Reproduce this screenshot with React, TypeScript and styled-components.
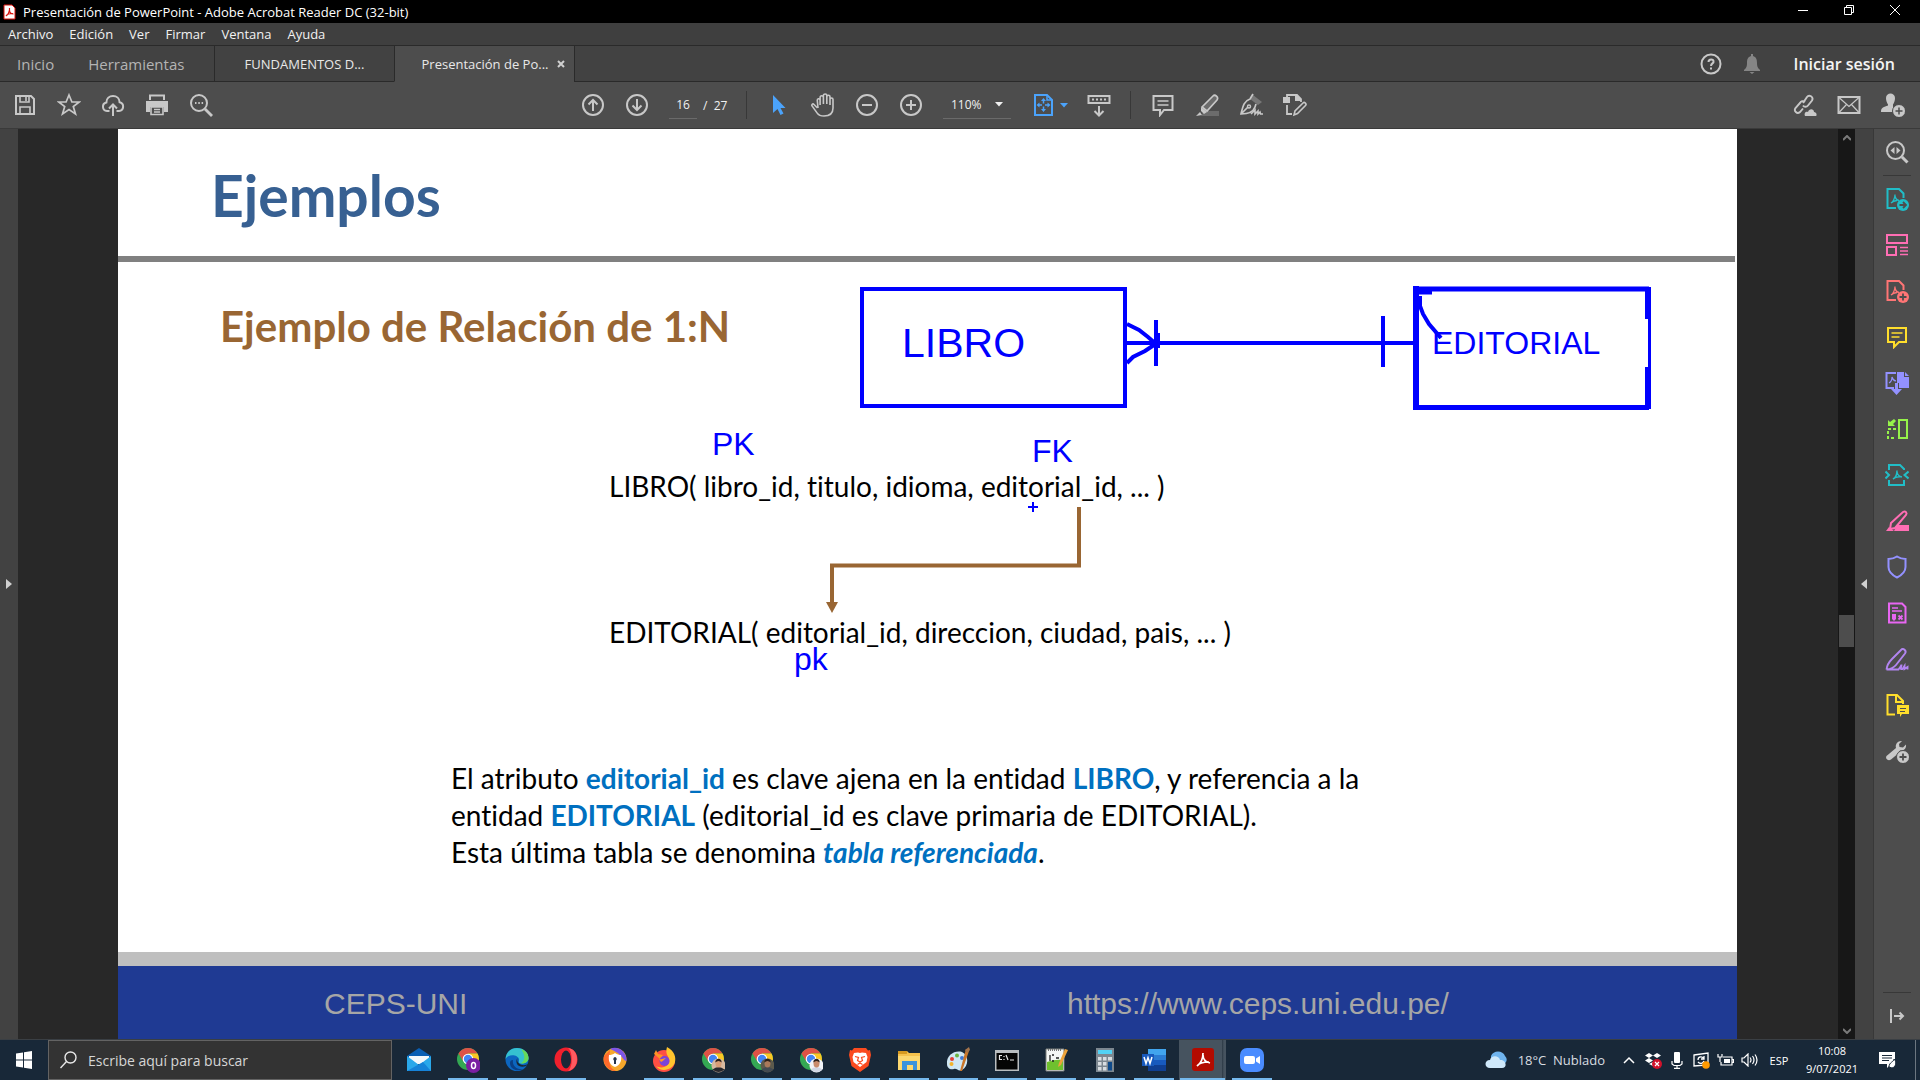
import React from "react";
import styled, { createGlobalStyle, css } from "styled-components";

const ui = `"Open Sans", "Noto Sans", sans-serif`;
const slideFont = `Lato, "Open Sans", sans-serif`;
const ink = "#0000ff";
const brown = "#996633";

const GlobalStyle = createGlobalStyle`
  * { box-sizing: border-box; }
  html, body, #root { height: 100%; margin: 0; }
  body { background: #282828; overflow: hidden; font-family: ${ui}; }
  button, input, select { font: inherit; color: inherit; background: none; border: 0; padding: 0; margin: 0; border-radius: 0; }
  button { display: inline-flex; align-items: center; justify-content: center; cursor: pointer; }
  svg { display: block; flex: none; }
`;

const Shell = styled.div`
  display: flex;
  flex-direction: column;
  height: 100vh;
`;

/* ---------- window chrome ---------- */

const TitleBar = styled.header`
  display: flex;
  align-items: center;
  height: 23px;
  padding: 0 2px 0 3px;
  background: #000;
  color: #fff;
`;

const TitleText = styled.h1`
  flex: 1;
  margin: 0 0 0 7px;
  font-size: 13px;
  font-weight: 400;
  line-height: 20px;
`;

const WindowButton = styled.button`
  width: 46px;
  height: 20px;
  align-self: flex-start;
`;

const MenuBar = styled.nav`
  display: flex;
  align-items: center;
  gap: 16px;
  height: 22px;
  padding: 0 8px;
  background: #3f3f3f;
  color: #f2f2f2;
  font-size: 13px;
`;

const TabBar = styled.div`
  display: flex;
  height: 37px;
  background: #424242;
  border-top: 1px solid #2a2a2a;
  color: #e8e8e8;
`;

const HomeTab = styled.button`
  padding: 0 17px;
  font-size: 15px;
  color: #b4b4b4;
  border-bottom: 1px solid #2a2a2a;
`;

const HomeTabs = styled.div`
  display: flex;
  width: 214px;
`;

const ToolsTab = styled(HomeTab)`
  flex: 1;
  justify-content: flex-start;
`;

const DocTab = styled.button<{ $active?: boolean }>`
  width: 180px;
  gap: 9px;
  padding-left: ${(p) => (p.$active ? "18px" : "0")};
  font-size: 13px;
  border-left: 1px solid #2a2a2a;
  border-bottom: 1px solid ${(p) => (p.$active ? "#4d4d4d" : "#2a2a2a")};
  background: ${(p) => (p.$active ? "#4d4d4d" : "#424242")};
`;

const TabActions = styled.div`
  display: flex;
  flex: 1;
  align-items: center;
  justify-content: flex-end;
  gap: 19px;
  padding-right: 25px;
  border-left: 1px solid #2a2a2a;
  border-bottom: 1px solid #2a2a2a;
`;

const SignIn = styled.button`
  margin-left: 12px;
  font-size: 16px;
  font-weight: 600;
  color: #f4f4f4;
`;

const Toolbar = styled.div`
  display: grid;
  grid-template-columns: 1fr auto 1fr;
  align-items: center;
  height: 47px;
  background: #4d4d4d;
  border-bottom: 1px solid #3a3a3a;
  color: #c8c8c8;
`;

const ToolGroup = styled.div<{ $end?: boolean; $middle?: boolean }>`
  display: flex;
  align-items: center;
  padding: ${(p) => (p.$middle ? "0 32px 0 0" : p.$end ? "0 5px 0 0" : "0 0 0 3px")};
  justify-content: ${(p) => (p.$end ? "flex-end" : "flex-start")};
`;

const ToolButton = styled.button<{ $blue?: boolean; $menu?: boolean }>`
  gap: 4px;
  width: ${(p) => (p.$menu ? "54px" : "44px")};
  height: 40px;
  color: ${(p) => (p.$blue ? "#4ba3fb" : "#c8c8c8")};
`;

const Divider = styled.div`
  width: 1px;
  height: 28px;
  margin: 0 10px 0 9px;
  background: #383838;
`;

const PageBox = styled.label`
  display: flex;
  align-items: center;
  gap: 6px;
  margin-left: 10px;
  width: 68px;
  font-size: 12px;
  color: #f0f0f0;
  white-space: nowrap;
`;

const PageInput = styled.input`
  width: 28px;
  height: 28px;
  text-align: center;
  border-bottom: 1px solid #6a6a6a;
`;

const ZoomBox = styled.label`
  display: flex;
  align-items: center;
  width: 68px;
  height: 28px;
  margin: 0 12px 0 10px;
  padding-right: 8px;
  border-bottom: 1px solid #6a6a6a;
  color: #f0f0f0;
  font-size: 12px;
`;

const ZoomSelect = styled.select`
  flex: 1;
  min-width: 0;
  padding-left: 8px;
  appearance: none;
`;

/* ---------- document area ---------- */

const Workspace = styled.main`
  display: flex;
  flex: 1;
  min-height: 0;
`;

const SideStrip = styled.button<{ $right?: boolean }>`
  width: ${(p) => (p.$right ? "19px" : "18px")};
  background: #424242;
  color: #d0d0d0;
  border-right: ${(p) => (p.$right ? "1px solid #383838" : "0")};
`;

const Canvas = styled.div`
  display: flex;
  flex: 1;
  padding: 0 101px 0 100px;
  background: #282828;
`;

const Slide = styled.article`
  position: relative;
  display: flex;
  flex: 1;
  flex-direction: column;
  background: #fff;
  color: #000;
  font-family: ${slideFont};
  font-variant-ligatures: none;
`;

const SlideTitle = styled.h2`
  margin: 0;
  padding: 34px 0 0 93px;
  height: 127px;
  font-size: 57px;
  line-height: 64px;
  font-weight: 700;
  color: #376092;
`;

const SlideRule = styled.hr`
  width: calc(100% - 2px);
  height: 6px;
  margin: 0;
  border: 0;
  background: #808080;
`;

const SlideSubtitle = styled.h3`
  margin: 0;
  padding: 38px 0 0 102px;
  font-size: 42px;
  line-height: 52px;
  font-weight: 700;
  color: ${brown};
`;

const Relations = styled.div`
  display: flex;
  flex-direction: column;
  gap: 110px;
  padding: 116px 0 0 491px;
  font-size: 28px;
  line-height: 36px;
`;

const Line = styled.p`
  margin: 0;
  white-space: nowrap;
`;

const Explanation = styled.div`
  padding: 110px 0 0 333px;
  font-size: 28px;
  line-height: 37px;

  strong { color: #0070c0; font-weight: 700; }
`;

const SlideFooter = styled.footer`
  display: grid;
  grid-template-columns: 949px 1fr;
  align-items: center;
  height: 87px;
  margin-top: auto;
  padding-top: 2px;
  border-top: 14px solid #bfbfbf;
  background: #1f3a93;
  color: #a6a6a6;
  font-family: "Liberation Sans", Arial, sans-serif;
  font-size: 30px;
  line-height: 36px;
`;

const FooterOrg = styled.span`
  padding-left: 206px;
`;

const FooterLink = styled.a`
  color: inherit;
  text-decoration: none;
`;

const Ink = styled.svg`
  position: absolute;
  left: 0;
  top: 0;
`;

const Note = styled.span<{ $x: number; $y: number; $size?: number }>`
  position: absolute;
  left: ${(p) => p.$x}px;
  top: ${(p) => p.$y}px;
  font-family: "Liberation Sans", Arial, sans-serif;
  font-size: ${(p) => p.$size ?? 32}px;
  line-height: 40px;
  color: ${ink};
`;

const ScrollTrack = styled.div`
  display: flex;
  flex-direction: column;
  align-items: center;
  width: 17px;
  background: #171717;
  color: #7a7a7a;
`;

const ScrollArrow = styled.button`
  width: 17px;
  height: 17px;
`;

const Thumb = styled.div`
  width: 15px;
  height: 32px;
  background: #4d4d4d;
`;

const Space = styled.div<{ $grow: number }>`
  flex: ${(p) => p.$grow};
`;

const Rail = styled.aside`
  display: flex;
  flex-direction: column;
  width: 46px;
  background: #4d4d4d;
`;

const RailButton = styled.button<{ $color: string }>`
  height: 46px;
  color: ${(p) => p.$color};
`;

const RailRule = styled.div`
  height: 1px;
  margin: 0 9px;
  background: #383838;
`;

/* ---------- taskbar ---------- */

const Taskbar = styled.footer`
  display: flex;
  height: 41px;
  background: #182838;
  border-top: 1px solid #3a3f44;
  color: #fff;
`;

const StartButton = styled.button`
  width: 48px;
`;

const SearchBox = styled.label`
  display: flex;
  align-items: center;
  gap: 11px;
  width: 344px;
  padding-left: 11px;
  margin-right: 2px;
  background: #333;
  border: 1px solid #636363;
  font-size: 14px;
`;

const SearchInput = styled.input`
  flex: 1;
  &::placeholder { color: #d6d6d6; opacity: 1; }
`;

const AppButton = styled.button<{ $running?: boolean; $active?: boolean }>`
  width: 49px;
  ${(p) =>
    p.$active &&
    css`
      background: linear-gradient(to right, #46535f 44px, #2b3844 44px, #46535f 46px);
    `}
  background-clip: content-box;
  padding: 0 1px;
  position: relative;
  &::after {
    content: "";
    position: absolute;
    left: ${(p) => (p.$active ? "2px" : "5px")};
    right: ${(p) => (p.$active ? "2px" : "4px")};
    bottom: 0;
    height: 2px;
    background: ${(p) => (p.$running ? "#76b9ed" : "transparent")};
  }
`;

const Tray = styled.div`
  display: flex;
  flex: 1;
  justify-content: flex-end;
  align-items: center;
  font-size: 12px;
`;

const Weather = styled.button`
  gap: 11px;
  margin-right: 12px;
  font-size: 13px;
  color: #d8dde1;
`;

const TrayButton = styled.button`
  width: 24px;
  height: 40px;
`;

const Language = styled.button`
  width: 36px;
  height: 40px;
  font-size: 11px;
`;

const Clock = styled.button`
  flex-direction: column;
  width: 70px;
  line-height: 18px;
  font-size: 11px;
`;

const Notifications = styled.button`
  width: 40px;
  height: 40px;
  margin-right: 8px;
`;

const DesktopEdge = styled.button`
  width: 5px;
  height: 40px;
  border-left: 1px solid #6c7680;
`;

/* ---------- icons ---------- */

const Icon = ({ children, size = 24, box = 24 }: { children: React.ReactNode; size?: number; box?: number }) => (
  <svg width={size} height={size} viewBox={`0 0 ${box} ${box}`} fill="none" stroke="currentColor" strokeWidth={2} aria-hidden="true">
    {children}
  </svg>
);

const Caret = () => (
  <svg width="8" height="5" viewBox="0 0 8 5" aria-hidden="true"><path d="M0 0h8L4 4.600z" fill="currentColor" /></svg>
);

const acro = "M8 16c2-1 4-4.500 4-8.500M12 9c.5 3 2 4.500 5 5M8 16c2-2 5-2.500 8-2.200";

const SaveIcon = () => <Icon><path d="M3 3h15l3 3v15H3z" /><path d="M7 3v6h9V3M13 4v4M7 21v-7h10v7" strokeWidth={1.600} /></Icon>;
const StarIcon = () => <Icon><path d="M12 2l2.900 7h7.300l-5.900 4.600 2.200 7.400L12 16.600 5.500 21l2.200-7.400L1.800 9h7.300z" strokeWidth={1.700} /></Icon>;
const CloudIcon = () => <Icon><path d="M8.500 18H6a4.300 4.300 0 0 1-.6-8.500C5.400 5.500 8.300 3 12 3s6.500 2.500 6.600 6.300A4.400 4.400 0 0 1 18 18h-2.500M12 23V12M8 15.500l4-4 4 4" /></Icon>;
const PrintIcon = () => (
  <Icon><path d="M5 7V2.500h14V7" /><path d="M1 8h22v11h-4v-5H5v5H1z" fill="currentColor" stroke="none" /><path d="M6 14v7.500h12V14zM9 16.500h6M9 19h6" strokeWidth={1.600} /></Icon>
);
const FindIcon = () => <Icon><circle cx="10" cy="10" r="8" /><path d="M16 16l7 7" strokeWidth={2.800} /><path d="M6 10h1.500M9.300 10h1.500M12.600 10h1.500" /></Icon>;
const UpIcon = () => <Icon><circle cx="12" cy="12" r="10" /><path d="M12 18V7M7.500 11.500L12 7l4.500 4.500" /></Icon>;
const DownIcon = () => <Icon><circle cx="12" cy="12" r="10" /><path d="M12 6v11M7.500 12.500L12 17l4.500-4.500" /></Icon>;
const MinusIcon = () => <Icon><circle cx="12" cy="12" r="10" /><path d="M7 12h10" /></Icon>;
const PlusIcon = () => <Icon><circle cx="12" cy="12" r="10" /><path d="M7 12h10M12 7v10" /></Icon>;
const PointerIcon = () => <Icon><path d="M6 2v18l4.500-4 3 6 3-1.500-3-5.500h5z" fill="currentColor" stroke="none" /></Icon>;
const HandIcon = () => (
  <Icon><path d="M6.500 15L3 11.500c-1.300-1.300-2.800.2-1.800 1.600l5 7C7.700 22.300 9.500 23 13 23c5.500 0 9-2.500 9-8V6.500c0-2-3-2-3 0V12M19 8V3.700c0-2-3.200-2-3.200 0V11M15.800 5V2.500c0-2-3.400-2-3.400 0V11M12.400 4.500c0-2.300-3.300-2.300-3.300 0V12M9.100 7c-.6-1.900-3-1.500-2.800.5L7 15" strokeWidth={1.600} /></Icon>
);
const FitIcon = () => (
  <Icon><path d="M3 2h12l5 5v15H3z" /><path d="M15 2v5h5" strokeWidth={1.500} /><path d="M11.500 7v10M6.500 12h10" strokeWidth={1.500} strokeDasharray="3.500 3" /><path d="M11.500 5l-2.500 3h5zM11.500 19l-2.500-3h5zM4.500 12l3-2.500v5zM18.500 12l-3-2.500v5z" fill="currentColor" stroke="none" /></Icon>
);
const ReadIcon = () => <Icon><rect x="1.500" y="3" width="21" height="7" /><path d="M5 6.500h14" strokeDasharray="2 2" /><path d="M12 13v9M7.500 18l4.500 4.500 4.500-4.500" /></Icon>;
const CommentIcon = () => <Icon><path d="M2.500 3h19v14H13l-4 5v-5H2.500z" /><path d="M6.500 8h11M6.500 12h11" strokeWidth={1.500} /></Icon>;
const MarkerIcon = () => (
  <Icon><path d="M9 18h15v5H6z" fill="#6c6c6c" stroke="none" /><path d="M7 14L18 3c2-2 6 1 4 4L12 18z" fill="#6c6c6c" strokeWidth={1.700} /><path d="M6 14l6 5-3 2-3-3zM5 19l2 3-6 1z" fill="currentColor" stroke="none" /></Icon>
);
const SignIcon = () => (
  <Icon><path d="M14 2l9 7-4 3-8-6z" fill="#777" stroke="none" /><path d="M14 1l-3 5C5 8 4 13 2 21c6 0 12-1 14-7l1-3M2 21l7-7" strokeWidth={1.700} /><circle cx="10" cy="13.500" r="1.500" strokeWidth={1.500} /><path d="M12 21l4-4v4l3-3v3l2-2 .5 2H24" strokeWidth={1.600} /></Icon>
);
const EditPagesIcon = () => (
  <Icon><path d="M4 8V2h10l4 4v3" strokeWidth={1.800} /><path d="M0 4h7v6H0zM12 2h2l4 4v2h-6z" fill="currentColor" stroke="none" /><path d="M4 12v9h5" strokeWidth={1.800} /><path d="M11 22l1-4 8-8c1.500-1.500 4 1 2.500 2.500l-8 8z" strokeWidth={1.600} /></Icon>
);
const LinkIcon = () => (
  <Icon><path d="M10 10l4-6c2-3 7 0 5 3.500l-4 5c-1.500 2-4 1.500-5 0M12 9C10 7.500 8 8 7 10l-4.500 5c-2 3 1.500 6.500 4.500 4l3-3.500" strokeWidth={1.900} /><path d="M12 23c-1.500-4 2-5 3-4 1-4 6-3.500 6 0 3 0 3 4 2 4z" fill="currentColor" stroke="none" /></Icon>
);
const MailIcon = () => <Icon><rect x="1.500" y="4" width="21" height="16" /><path d="M2 4.500l10 9 10-9M2 19.500l7.500-8M22 19.500l-7.500-8" strokeWidth={1.200} /></Icon>;
const UserIcon = () => (
  <Icon><path d="M5 5c0-6 9-6 9 0 0 3-1 5-2 6.500V14l2 1v4H0c0-5 3-5 7-6.500v-1C6 10 5 8 5 5z" fill="currentColor" stroke="none" /><circle cx="18" cy="18" r="6.500" fill="currentColor" stroke="#4d4d4d" strokeWidth={1} /><path d="M18 14.500v7M14.500 18h7" stroke="#4d4d4d" strokeWidth={1.500} /></Icon>
);

const NavLens = () => <Icon><circle cx="10.500" cy="10.500" r="8.500" /><path d="M17 17l5.500 5.500" strokeWidth={3} /><path d="M9.500 7v7L5.500 10.500zM11.500 7v7l4-3.500z" fill="currentColor" stroke="none" /></Icon>;
const PdfBadge = ({ plus }: { plus?: boolean }) => (
  <Icon>
    <path d="M11 21H2.500V2H14l4.500 4.500V11" />
    <path d="M6 16c2-1 4-5 4-8.500M10 9c.5 2.500 1.500 4 4 4.500M6 16c1.500-1.500 3.500-2.300 6-2.500" strokeWidth={1.300} />
    <circle cx="18" cy="18" r="6" fill="currentColor" stroke="none" />
    <path d={plus ? "M18 14.500v7M14.500 18h7" : "M14.500 18h6M18 15l3 3-3 3"} stroke="#4d4d4d" strokeWidth={1.800} />
  </Icon>
);
const OrganizeIcon = () => <Icon><rect x="2" y="2" width="20" height="8" /><rect x="2" y="14" width="9" height="8" /><path d="M15 14.500h8M15 18h8M15 21.500h8" strokeWidth={1.300} /></Icon>;
const RailComment = () => <Icon><path d="M3 3h18v14h-7l-5 5v-5H3z" /><path d="M6.500 8h11M6.500 12h8" strokeWidth={1.700} /></Icon>;
const CombineIcon = () => (
  <Icon><path d="M9 17H1.500V2H11" /><path d="M12 1h7v5h5v11H14v-5h-2z" fill="currentColor" stroke="none" /><path d="M20 1l4 4h-4z" fill="currentColor" stroke="none" /><path d="M4 12c2-1 3-4 3-6 .5 2 1.500 3.500 4 4" strokeWidth={1.200} /><path d="M10 12h3v6h4l-5.500 6L6 18h4z" fill="currentColor" stroke="none" /></Icon>
);
const CompareIcon = () => <Icon><rect x="14" y="3" width="8" height="18" /><path d="M11 12H3v9h8" strokeDasharray="3 2" /><path d="M3 9V3l2 2 4-3 2 2-3 3 2 2z" fill="currentColor" stroke="none" /></Icon>;
const CompressIcon = () => <Icon><path d="M4 7V2h11l4 4v1M4 17v5h15v-5M0.500 8.500L4 12 .5 15.500M23.500 8.500L19.500 12l4 3.500" /><path d={acro} strokeWidth={1.500} /></Icon>;
const RedactIcon = () => <Icon><path d="M1 22l3-4 5 4zM12 16h12v6H9z" fill="currentColor" stroke="none" /><path d="M6 14L18 3c2.500-1.500 4.500 1 3 3L10 19l-5 1z" /></Icon>;
const ShieldIcon = () => <Icon><path d="M12 1.500c3 2 5.500 2.500 8.500 2.500v8c0 5-3.500 8-8.500 10.500C7 20 3.500 17 3.500 12V4c3 0 5.500-.5 8.500-2.500z" /></Icon>;
const FormIcon = () => (
  <Icon><path d="M4 2.500h13l3.500 3.500v15.500H4z" /><path d="M7 7h6M7 10h10" strokeWidth={1.300} /><path d="M7 13h4v5l-2 2-2-2z" fill="currentColor" stroke="none" /><path d="M13.500 14.500l4 4M17.500 14.500l-4 4" strokeWidth={1.800} /></Icon>
);
const RailSign = () => <Icon><path d="M1.500 22.500C2 18 4 15 7 12L16 3c2-2.500 6 .5 4 3.500L11 18c-2 2.500-5 4-9.500 4.500h12c3-4 3-5 3-5 0 3-2 5 1 4.500 2-3 2-3 2-3v3l3-2v2.500" strokeWidth={1.900} /></Icon>;
const NotePage = () => (
  <Icon><path d="M10 21.500H2.500V2H12l6 6v3M11 2v7h7" /><path d="M12 12h12v9h-7l-2 3v-3h-3z" fill="currentColor" stroke="none" /><path d="M15 15.500h6M15 18.500h5" stroke="#4d4d4d" strokeWidth={1.200} /></Icon>
);
const WrenchIcon = () => (
  <Icon><path d="M1.500 17L11 9c-1-4 2-7.500 6-7l-3 3 .5 3 3.500.5L21 5.500c.5 4-2 6.500-6 6l-3 4-6 5c-3 2-6-1-4.500-3.500z" fill="currentColor" stroke="none" /><circle cx="18" cy="18" r="6.500" fill="currentColor" stroke="#4d4d4d" strokeWidth={1} /><path d="M18 14.500v7M14.500 18h7" stroke="#4d4d4d" strokeWidth={1.800} /></Icon>
);
const CollapseIcon = () => <Icon size={16} box={16}><path d="M2 1v14M5 8h9M10.500 4.500L14 8l-3.500 3.500" /></Icon>;

const rail: [string, string, React.ReactNode][] = [
  ["Exportar PDF", "#21bdc7", <PdfBadge />],
  ["Organizar páginas", "#ff6eb4", <OrganizeIcon />],
  ["Crear PDF", "#ff7575", <PdfBadge plus />],
  ["Comentar", "#ffde2c", <RailComment />],
  ["Combinar archivos", "#9391ff", <CombineIcon />],
  ["Comparar archivos", "#96f24a", <CompareIcon />],
  ["Comprimir PDF", "#21bdc7", <CompressIcon />],
  ["Censurar", "#ff6eb4", <RedactIcon />],
  ["Proteger", "#9391ff", <ShieldIcon />],
  ["Preparar formulario", "#e866f2", <FormIcon />],
  ["Rellenar y firmar", "#b285f0", <RailSign />],
  ["Enviar para comentar", "#ffde2c", <NotePage />],
  ["Más herramientas", "#c8c8c8", <WrenchIcon />],
];

/* taskbar application icons, each on a 24-unit square */

const App24 = ({ children }: { children: React.ReactNode }) => (
  <svg width="24" height="26" viewBox="0 0 24 26" aria-hidden="true">{children}</svg>
);

const Chrome = ({ children }: { children?: React.ReactNode }) => (
  <App24>
    <circle cx="12" cy="12" r="11" fill="#34a853" />
    <path d="M2.500 6.500A11 11 0 0 1 21.500 6.500H12L7 14z" fill="#de5246" />
    <path d="M21.500 6.500A11 11 0 0 1 12 23l5-9-5-7.500z" fill="#fbc723" />
    <circle cx="12" cy="12" r="5.300" fill="#fff" />
    <circle cx="12" cy="12" r="4.200" fill="#4285f4" />
    {children}
  </App24>
);

const Portrait = ({ bg, skin, shirt }: { bg: string; skin: string; shirt: string }) => (
  <g><circle cx="17.500" cy="18.500" r="7" fill={bg} /><path d="M11.500 22.500q6-5 12 0-6 5-12 0z" fill={shirt} /><ellipse cx="17.500" cy="16.500" rx="3" ry="4" fill={skin} /><path d="M14.300 15.500c0-5 6.400-5 6.400 0-2-2-4.400-2-6.400 0z" fill="#2b211c" /></g>
);

const apps: [string, React.ReactNode, boolean, boolean?][] = [
  ["Correo", <App24><path d="M0 9L12 1l12 8v3H0z" fill="#0a5fb4" /><path d="M2 9h20v8H2z" fill="#f4f8fb" /><path d="M0 9l12 9L24 9v15H0z" fill="#2aa8ea" /><path d="M0 24l16-9 8 9z" fill="#1683d8" /></App24>, false],
  ["Chrome", <Chrome><circle cx="17.500" cy="18.500" r="7.500" fill="#7b1fa2" /><ellipse cx="17.500" cy="18.500" rx="2" ry="3" fill="none" stroke="#fff" strokeWidth="1.500" /></Chrome>, true],
  ["Edge", <App24><circle cx="12" cy="12.500" r="11.500" fill="#0c66c0" /><path d="M.5 12C1 5 6 1 12 1c7 0 11.500 5 11.500 10 0 4-4 6-8 5.500-3-.5-1-2-1.500-4.500C13 8 4 6 .5 12z" fill="#35c1d0" /><path d="M16 2c5 1.500 7.500 5 7.500 9 0 4-4 6-8 5.500 6-3 4-10 .5-14.500z" fill="#66d95a" /><path d="M8 13c-1 6 4 10 10 9-4 3-13 1-13-6 0-2 1-3 3-3z" fill="#0a3f86" /><path d="M13 11c-2 2 0 6 4 7 3 .5 5-.5 6-1-1 3-9 4-11 0-1-2-1-5 1-6z" fill="#182838" /></App24>, true],
  ["Opera", <App24><ellipse cx="12" cy="12.500" rx="11.500" ry="12" fill="#f0202d" /><path d="M14 1C26 2 26 22 14 24c5-3 5-20 0-23z" fill="#ff5a60" /><ellipse cx="12" cy="12.500" rx="5" ry="9" fill="#182838" /></App24>, true],
  ["Navegador privado", <App24><circle cx="12" cy="12.500" r="11.500" fill="#f6a82c" /><path d="M7 2c8-4 17 3 16.500 12C19 13 20 7 7 2z" fill="#7d55e8" /><path d="M1 9c-2 8 5 16 12 15C5 21 6 12 7 3z" fill="#ff6a2b" /><path d="M12 6c2 1.500 4 2 6 2 1 6-1 10-6 12-5-2-7-6-6-12 2 0 4-.5 6-2z" fill="#fff" /><path d="M12 10a2 2 0 0 1 1 3.500V17h-2v-3.500A2 2 0 0 1 12 10z" fill="#26344a" /></App24>, false],
  ["Firefox", <App24><circle cx="12" cy="14" r="11" fill="#ff4f43" /><path d="M15 0c8 4 9 11 8 15-2 8-14 11-19 4 7 4 15-1 13-7-1-4-4-5-2-12z" fill="#ffc42e" /><path d="M2 7l2-4 2 4 5 1-3 4z" fill="#ff9524" /><circle cx="12.500" cy="14" r="5" fill="#7a45d8" /><path d="M7 12c3 1 4-1 7-1-2 1-2 3-5 4z" fill="#ff9524" /></App24>, true],
  ["Chrome perfil 2", <Chrome><Portrait bg="#d6b9a0" skin="#d99d75" shirt="#29292e" /></Chrome>, true],
  ["Chrome perfil 3", <Chrome><Portrait bg="#5c5a4c" skin="#a9795a" shirt="#424a52" /></Chrome>, true],
  ["Chrome perfil 4", <Chrome><Portrait bg="#f2f4f8" skin="#c98c6d" shirt="#d0d6e4" /></Chrome>, true],
  ["Brave", <App24><path d="M6 1h12l2 2.500 2-.5 1 5-2.500 11L12 25l-8.500-6L1 8l1-5 2 .5z" fill="#fb4b1f" /><path d="M6 6l4-.5 2 .5 2-.5 4 .5 1.500 4-1 5L12 20l-6.500-5-1-5z" fill="#fff" /><path d="M7 9.500l3.500 1-1 3L12 15l2.500-1.500-1-3 3.500-1M9.500 17.500L12 16l2.500 1.500" fill="none" stroke="#fb4b1f" strokeWidth="1.200" /></App24>, true],
  ["Explorador de archivos", <App24><path d="M1 4h9l2 2h11v17H1z" fill="#f6c24c" /><path d="M1 4h9v3H1z" fill="#d79a20" /><path d="M1 9h22v14H1z" fill="#fcd870" /><path d="M5 14h15v9h-4v-5h-6v5H5z" fill="#3b93dc" /></App24>, true],
  ["Paint", <App24><path d="M1 17C0 8 9 3 16 5c7 3 7 14 0 18-4 2-5-2-8-1-4 1-7-1-7-5z" fill="#cfe7f4" /><circle cx="6" cy="12" r="2" fill="#e23d36" /><circle cx="11" cy="8.500" r="2" fill="#6bb541" /><circle cx="5.500" cy="17" r="2" fill="#f3b32b" /><circle cx="16" cy="11" r="2" fill="#3f79d6" /><path d="M20 2l3 2-7 20h-2z" fill="#c9762a" /><path d="M19 3l4-3 1 3-3 3z" fill="#a3744c" /></App24>, true],
  ["Símbolo del sistema", <App24><path d="M0 3h24v21H0z" fill="#b9bdc0" /><path d="M1.500 6h21v16.500h-21z" fill="#050505" /><path d="M7 8.500H4.500v4H7M9 9v1M9 12v1M11 8l2 5M15 13h4" fill="none" stroke="#e8e8e8" strokeWidth="1.200" /></App24>, true],
  ["Editor", <App24><path d="M2 2h18v22H2z" fill="#f4f6f4" stroke="#7b7f7b" /><path d="M3 15q8-3 16-2v10H3z" fill="#6fc02e" /><path d="M4 3h14" stroke="#777" strokeWidth="2" strokeDasharray="1 1" /><path d="M6 8v6M8 8h2M8 14h2M12 11h3" stroke="#222" strokeWidth="1.300" fill="none" /><path d="M21 2l3 1-7 15-3 2 1-4z" fill="#eda33b" /></App24>, true],
  ["Calculadora", <App24><path d="M3 1h18v24H3z" fill="#7c8790" /><path d="M5 3h14v4H5z" fill="#52d2f4" /><path d="M5 10h3.500v3.500H5zM10 10h3.500v3.500H10zM15 10h4v3.500h-4zM5 15h3.500v3.500H5zM10 15h3.500v3.500H10zM5 20h3.500v3.500H5zM10 20h3.500v3.500H10z" fill="#d8dde1" /><path d="M15 15h4v8.500h-4z" fill="#0f4a8a" /></App24>, true],
  ["Word", <App24><path d="M6 2h18v6H6z" fill="#41a5ee" /><path d="M6 8h18v5H6z" fill="#2b7cd3" /><path d="M6 13h18v5H6z" fill="#185abd" /><path d="M6 18h18v6H6z" fill="#103f91" /><path d="M0 7h12v12H0z" fill="#185abd" /><path d="M2 10l2 6.500 2-6 2 6 2-6.500" fill="none" stroke="#fff" strokeWidth="1.500" /></App24>, true],
  ["Acrobat Reader", <App24><rect x="1" y="1" width="22" height="23" rx="3" fill="#b30b00" /><path d="M6 19c3-2 6-7 6-13M12 8c0 5 3 7 7 8M6 19c2-3 6-4 12-4" fill="none" stroke="#fff" strokeWidth="1.700" /></App24>, true, true],
  ["Zoom", <App24><rect x="0" y="1" width="24" height="24" rx="7" fill="#4a8cff" /><rect x="4" y="9" width="11" height="8" rx="2" fill="#fff" /><path d="M16 11.500l4-2.500v8l-4-2.500z" fill="#fff" /></App24>, true],
];

const menus = ["Archivo", "Edición", "Ver", "Firmar", "Ventana", "Ayuda"];

const Tool = ({ label, children, blue, menu }: { label: string; children: React.ReactNode; blue?: boolean; menu?: boolean }) => (
  <ToolButton aria-label={label} $blue={blue} $menu={menu}>{children}</ToolButton>
);

const DiagramInk = () => (
  <Ink width="1619" height="600" viewBox="118 129 1619 600" fill="none" stroke={ink} strokeWidth="4" aria-hidden="true">
    <rect x="862" y="289" width="263" height="117" />
    <path d="M1127 343H1416" />
    <path d="M1156 320v46M1383 316v51" />
    <path d="M1127 324l12 6 9 7 8 7M1127 363l6-6 12-6 12-8M1158 333v15" />
    <path d="M1416 407V289H1649" strokeWidth="5" />
    <path d="M1416 286v124" strokeWidth="6" />
    <path d="M1415 407.500H1649" strokeWidth="5" />
    <path d="M1649.500 287v122" strokeWidth="3" />
    <path d="M1648 287v32M1648 367v42" strokeWidth="6" />
    <path d="M1418 292h14" strokeWidth="5" />
    <path d="M1420 296v10l3 8 6 10 12 14" />
    <path d="M1028 507h10M1033 502v10" strokeWidth="2" />
    <path d="M1079 507v58.500H832V603" stroke={brown} />
    <path d="M826 602h12l-6 11z" fill={brown} stroke="none" />
  </Ink>
);

export default function App() {
  return (
    <Shell>
      <GlobalStyle />
      <TitleBar>
        <svg width="13" height="16" viewBox="0 0 13 16" aria-hidden="true">
          <path d="M1 1h8l3 3v11H1z" fill="#fff" stroke="#d8150f" />
          <path d="M3 12c2-1 4-5 3.500-8M6.500 6c0 2 1 4 4 4M3 12c1-2 4-2.500 7-2.500" fill="none" stroke="#d8150f" strokeWidth="1.200" />
        </svg>
        <TitleText>Presentación de PowerPoint - Adobe Acrobat Reader DC (32-bit)</TitleText>
        <WindowButton aria-label="Minimizar"><svg width="10" height="10"><path d="M0 5.500h10" stroke="#fff" /></svg></WindowButton>
        <WindowButton aria-label="Restaurar"><svg width="10" height="10" fill="none" stroke="#fff"><path d="M.5 2.500h7v7h-7zM2.500 2V.5h7v7H8" /></svg></WindowButton>
        <WindowButton aria-label="Cerrar"><svg width="10" height="10" stroke="#fff"><path d="M0 0l10 10M10 0L0 10" /></svg></WindowButton>
      </TitleBar>

      <MenuBar>{menus.map((m) => <button key={m}>{m}</button>)}</MenuBar>

      <TabBar>
        <HomeTabs>
          <HomeTab>Inicio</HomeTab>
          <ToolsTab>Herramientas</ToolsTab>
        </HomeTabs>
        <DocTab>FUNDAMENTOS D...</DocTab>
        <DocTab $active>
          Presentación de Po...
          <svg width="8" height="8" stroke="#d0d0d0" strokeWidth="2" aria-hidden="true"><path d="M1 1l6 6M7 1L1 7" /></svg>
        </DocTab>
        <TabActions>
          <button aria-label="Ayuda">
            <svg width="22" height="22" viewBox="0 0 22 22" fill="none" stroke="#c8c8c8" strokeWidth="2">
              <circle cx="11" cy="11" r="9.500" /><path d="M8.500 9c0-3.500 5.500-3.500 5 0-.2 1.500-2.500 1.500-2.500 4M11 14.500v2" />
            </svg>
          </button>
          <button aria-label="Notificaciones">
            <svg width="22" height="22" viewBox="0 0 22 22" fill="#858585"><path d="M10 1h2v2c3 1 4 3 4 7 0 4 1 5 3 7v1H3v-1c2-2 3-3 3-7 0-4 1-6 4-7zM8.500 19h5l-2.500 2z" /></svg>
          </button>
          <SignIn>Iniciar sesión</SignIn>
        </TabActions>
      </TabBar>

      <Toolbar>
        <ToolGroup>
          <Tool label="Guardar"><SaveIcon /></Tool>
          <Tool label="Favorito"><StarIcon /></Tool>
          <Tool label="Subir a la nube"><CloudIcon /></Tool>
          <Tool label="Imprimir"><PrintIcon /></Tool>
          <Tool label="Buscar"><FindIcon /></Tool>
        </ToolGroup>
        <ToolGroup $middle>
          <Tool label="Página anterior"><UpIcon /></Tool>
          <Tool label="Página siguiente"><DownIcon /></Tool>
          <PageBox><PageInput defaultValue="16" aria-label="Página" />/&nbsp; 27</PageBox>
          <Divider />
          <Tool label="Seleccionar" blue><PointerIcon /></Tool>
          <Tool label="Mano"><HandIcon /></Tool>
          <Tool label="Alejar"><MinusIcon /></Tool>
          <Tool label="Acercar"><PlusIcon /></Tool>
          <ZoomBox><ZoomSelect aria-label="Zoom"><option>110%</option></ZoomSelect><Caret /></ZoomBox>
          <Tool label="Ajustar página" blue menu><FitIcon /><Caret /></Tool>
          <Tool label="Modo de lectura"><ReadIcon /></Tool>
          <Divider />
          <Tool label="Añadir comentario"><CommentIcon /></Tool>
          <Tool label="Resaltar"><MarkerIcon /></Tool>
          <Tool label="Firmar"><SignIcon /></Tool>
          <Tool label="Editar páginas"><EditPagesIcon /></Tool>
        </ToolGroup>
        <ToolGroup $end>
          <Tool label="Compartir vínculo"><LinkIcon /></Tool>
          <Tool label="Enviar por correo"><MailIcon /></Tool>
          <Tool label="Compartir con otros"><UserIcon /></Tool>
        </ToolGroup>
      </Toolbar>

      <Workspace>
        <SideStrip aria-label="Mostrar panel de navegación"><svg width="6" height="10"><path d="M0 0l6 5-6 5z" fill="currentColor" /></svg></SideStrip>
        <Canvas>
          <Slide>
            <SlideTitle>Ejemplos</SlideTitle>
            <SlideRule />
            <SlideSubtitle>Ejemplo de Relación de 1:N</SlideSubtitle>
            <Relations>
              <Line>LIBRO( libro_id, titulo, idioma, editorial_id, ... )</Line>
              <Line>EDITORIAL( editorial_id, direccion, ciudad, pais, ... )</Line>
            </Relations>
            <Explanation>
              <Line>El atributo <strong>editorial_id</strong> es clave ajena en la entidad <strong>LIBRO</strong>, y referencia a la</Line>
              <Line>entidad <strong>EDITORIAL</strong> (editorial_id es clave primaria de EDITORIAL).</Line>
              <Line>Esta última tabla se denomina <strong><em>tabla referenciada</em></strong>.</Line>
            </Explanation>
            <SlideFooter>
              <FooterOrg>CEPS-UNI</FooterOrg>
              <FooterLink href="https://www.ceps.uni.edu.pe/">https://www.ceps.uni.edu.pe/</FooterLink>
            </SlideFooter>
            <DiagramInk />
            <Note $x={784} $y={194} $size={41}>LIBRO</Note>
            <Note $x={1314} $y={194}>EDITORIAL</Note>
            <Note $x={594} $y={295}>PK</Note>
            <Note $x={914} $y={302}>FK</Note>
            <Note $x={676} $y={510}>pk</Note>
          </Slide>
        </Canvas>
        <ScrollTrack>
          <ScrollArrow aria-label="Subir"><svg width="8" height="6" fill="none" stroke="currentColor" strokeWidth="2"><path d="M0 5l4-4 4 4" /></svg></ScrollArrow>
          <Space $grow={469} />
          <Thumb />
          <Space $grow={375} />
          <ScrollArrow aria-label="Bajar"><svg width="8" height="6" fill="none" stroke="currentColor" strokeWidth="2"><path d="M0 1l4 4 4-4" /></svg></ScrollArrow>
        </ScrollTrack>
        <SideStrip $right aria-label="Ocultar panel de herramientas"><svg width="6" height="10"><path d="M6 0L0 5l6 5z" fill="currentColor" /></svg></SideStrip>
        <Rail>
          <RailButton $color="#c8c8c8" aria-label="Buscar herramientas"><NavLens /></RailButton>
          <RailRule />
          {rail.map(([label, color, icon]) => (
            <RailButton key={label} $color={color} aria-label={label}>{icon}</RailButton>
          ))}
          <Space $grow={1} />
          <RailRule />
          <RailButton $color="#c8c8c8" aria-label="Contraer"><CollapseIcon /></RailButton>
        </Rail>
      </Workspace>

      <Taskbar>
        <StartButton aria-label="Inicio de Windows">
          <svg width="16" height="18" viewBox="0 0 16 18" fill="#fff"><path d="M0 2.500l7-1v7H0zM8 1.300L16 0v8.500H8zM0 9.500h7v7l-7-1zM8 9.500h8V18l-8-1.300z" /></svg>
        </StartButton>
        <SearchBox>
          <svg width="17" height="18" viewBox="0 0 17 18" fill="none" stroke="#e8e8e8" strokeWidth="1.400" aria-hidden="true"><circle cx="10.500" cy="6.500" r="5.500" /><path d="M6.500 10.500L.5 17" /></svg>
          <SearchInput placeholder="Escribe aquí para buscar" />
        </SearchBox>
        {apps.map(([label, icon, running, active]) => (
          <AppButton key={label} aria-label={label} $running={running} $active={active}>{icon}</AppButton>
        ))}
        <Tray>
          <Weather>
            <svg width="22" height="18" viewBox="0 0 22 18" aria-hidden="true"><path d="M6 5C8-1 18-1 20 5c3 3 2 8-3 8H6z" fill="#6fb4ee" /><path d="M5 17c-6 0-6-8 0-8 1-5 9-5 10 0 6-1 8 8 2 8z" fill="#cfe9fb" /></svg>
            <span>18°C&nbsp; Nublado</span>
          </Weather>
          <TrayButton aria-label="Iconos ocultos"><svg width="12" height="8" fill="none" stroke="#fff" strokeWidth="1.500"><path d="M1 7l5-5 5 5" /></svg></TrayButton>
          <TrayButton aria-label="Dropbox"><svg width="17" height="17" viewBox="0 0 17 17" fill="#fff"><path d="M4 1l4 2.500L4 6 0 3.500zM12 1l4 2.500L12 6 8 3.500zM4 6l4 2.500L4 11 0 8.500zM4 12l4-2v4z" /><circle cx="12" cy="12" r="5" fill="#d1122b" /><path d="M10 10l4 4M14 10l-4 4" stroke="#fff" strokeWidth="1.200" /></svg></TrayButton>
          <TrayButton aria-label="Micrófono"><svg width="12" height="17" viewBox="0 0 12 17" fill="#fff"><rect x="3" y="0" width="6" height="11" rx="1" /><path d="M1 9v3l2 1.500h6l2-1.500V9M6 13v3M3 16.300h6" fill="none" stroke="#fff" strokeWidth="1.200" /></svg></TrayButton>
          <TrayButton aria-label="Actualización"><svg width="17" height="17" viewBox="0 0 17 17" fill="none" stroke="#fff" strokeWidth="1.300"><path d="M1 3l14-2v12L1 14zM5 8c0-4 5-4 6-1M11 4v3H8M11 9c-1 3-4 3-6 1" /><circle cx="13" cy="13" r="3.800" fill="#ff9a00" stroke="none" /></svg></TrayButton>
          <TrayButton aria-label="Batería"><svg width="17" height="14" viewBox="0 0 17 14" fill="none" stroke="#fff" strokeWidth="1.200"><path d="M6 4h9v8H4V9M15 6.500h1.500v3H15" /><path d="M7 6h6v4H7z" fill="#fff" stroke="none" /><path d="M1 1v3h4V1M3 4v5" /></svg></TrayButton>
          <TrayButton aria-label="Volumen"><svg width="17" height="14" viewBox="0 0 17 14" fill="none" stroke="#fff" strokeWidth="1.200"><path d="M1 5h2l4-4v12L3 9H1zM9 4.500q2 2.500 0 5M11.500 3q3 4 0 8M14 1.500q4 5.500 0 11" /></svg></TrayButton>
          <Language>ESP</Language>
          <Clock><span>10:08</span><span>9/07/2021</span></Clock>
          <Notifications aria-label="Notificaciones del sistema"><svg width="17" height="17" viewBox="0 0 17 17"><path d="M0 0h16v12h-4l-4 4v-4H0z" fill="#fff" /><path d="M3 3.500h10M3 6h10M3 8.500h7" stroke="#182838" strokeWidth="1.200" /><path d="M10 15c0-5 5-5 5-8 3 3 2 8-2 9z" fill="#fff" stroke="#182838" /></svg></Notifications>
          <DesktopEdge aria-label="Mostrar escritorio" />
        </Tray>
      </Taskbar>
    </Shell>
  );
}
